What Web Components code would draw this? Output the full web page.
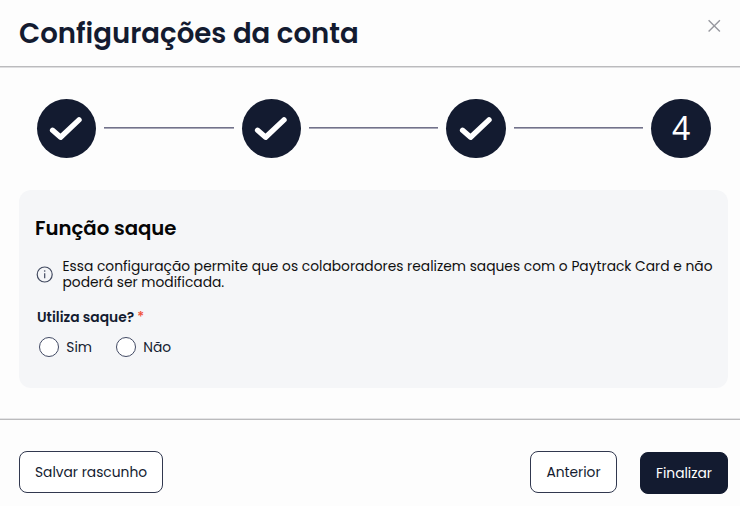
<!DOCTYPE html>
<html lang="pt-BR">
<head>
  <meta charset="UTF-8" />
  <meta name="viewport" content="width=device-width, initial-scale=1.0" />
  <title>Configurações da conta</title>
  <style>
    :root {
      --navy: #131b30;
      --surface: #fdfdfd;
      --panel: #f5f6f8;
    }

    body {
      margin: 0;
      background-color: var(--surface);
      color: var(--navy);
      font-family: Poppins, Inter, "Liberation Sans", sans-serif;
      overflow: hidden;
    }
  </style>
</head>
<body>
  <account-dialog>
    <span slot="title">Configurações da conta</span>
    <step-progress current="4" total="4"></step-progress>
    <settings-panel>
      <span slot="title">Função saque</span>
      <info-note>Essa configuração permite que os colaboradores realizem saques com o Paytrack Card e não<br />poderá ser modificada.</info-note>
      <radio-group label="Utiliza saque?">
        <radio-option>Sim</radio-option>
        <radio-option>Não</radio-option>
      </radio-group>
    </settings-panel>
    <action-button slot="start" style="width: 144px">Salvar rascunho</action-button>
    <action-button slot="end" style="width: 87px">Anterior</action-button>
    <action-button slot="end" primary style="width: 88px">Finalizar</action-button>
  </account-dialog>

  <script>
    class AccountDialog extends HTMLElement {
      constructor() {
        super();
        this.attachShadow({ mode: "open" });
      }

      connectedCallback() {
        this.shadowRoot.innerHTML = `
          <style>
            :host {
              display: flex;
              flex-direction: column;
              box-sizing: border-box;
              width: 740px;
              height: 506px;
              background-color: var(--surface);
            }

            header {
              display: flex;
              justify-content: space-between;
              align-items: flex-start;
              box-sizing: border-box;
              height: 68px;
              padding: 14px 19px 0 19px;
              border-bottom: 1px solid #dedee0;
              box-shadow: inset 0 -1px #bbbbbd;
            }

            h1 {
              margin: 0;
              font-size: 27.6px;
              line-height: 40px;
              font-weight: 600;
              white-space: nowrap;
            }

            button {
              display: flex;
              padding: 0;
              margin-top: 5px;
              border: 0;
              background: none;
            }

            main {
              flex: 1;
              padding: 30px 12px 0 19px;
            }

            footer {
              display: flex;
              justify-content: space-between;
              box-sizing: border-box;
              height: 88px;
              padding: 32px 12px 0 19px;
              border-top: 1px solid #e4e4e6;
              box-shadow: inset 0 1px #bbbbbd;
            }

            .end {
              display: flex;
              gap: 23px;
            }
          </style>
          <header>
            <h1><slot name="title"></slot></h1>
            <button type="button" aria-label="Fechar">
              <svg width="14" height="14" viewBox="0 0 14 14" fill="none" stroke="#97989f" stroke-width="1.4">
                <path d="M1.6 1.3L12.9 12.6M12.9 1.3L1.6 12.6" />
              </svg>
            </button>
          </header>
          <main><slot></slot></main>
          <footer>
            <slot name="start"></slot>
            <div class="end"><slot name="end"></slot></div>
          </footer>
        `;
      }
    }

    class StepProgress extends HTMLElement {
      constructor() {
        super();
        this.attachShadow({ mode: "open" });
      }

      connectedCallback() {
        const current = Number(this.getAttribute("current"));
        const total = Number(this.getAttribute("total"));
        const check = `
          <svg width="60" height="60" viewBox="0 0 60 60" fill="none" stroke="#fff" stroke-width="5.4" stroke-linecap="round" stroke-linejoin="round">
            <path d="M16.6 32.3L24.6 39.2L43 21.9" />
          </svg>`;

        let items = "";
        for (let i = 1; i <= total; i++) {
          if (i > 1) items += `<div class="line"></div>`;
          items += `<div class="step">${i < current ? check : `<span>${i}</span>`}</div>`;
        }

        this.shadowRoot.innerHTML = `
          <style>
            :host {
              display: flex;
              align-items: center;
              gap: 8px;
              padding: 0 17.2px 0 17.7px;
              height: 60.5px;
            }

            .step {
              display: flex;
              justify-content: center;
              align-items: center;
              flex: none;
              width: 59.5px;
              height: 59.5px;
              border-radius: 50%;
              background-color: var(--navy);
              color: #fff;
              font-family: "Noto Sans", "Open Sans", sans-serif;
              font-size: 32px;
              line-height: 40px;
              font-weight: 400;
            }

            .step svg {
              flex: none;
            }

            .line {
              flex: 1;
              height: 1px;
              margin-bottom: 2px;
              background-color: #72728a;
              box-shadow: 0 1px #a8a8b8;
            }
          </style>
          ${items}
        `;
      }
    }

    class SettingsPanel extends HTMLElement {
      constructor() {
        super();
        this.attachShadow({ mode: "open" });
      }

      connectedCallback() {
        this.shadowRoot.innerHTML = `
          <style>
            :host {
              display: block;
              box-sizing: border-box;
              height: 198.5px;
              margin-top: 31px;
              padding: 23.5px 10px 0 16px;
              border-radius: 12px;
              background-color: var(--panel);
            }

            h2 {
              margin: 0 0 16px;
              color: #050505;
              font-size: 19.7px;
              line-height: 30px;
              font-weight: 600;
            }
          </style>
          <h2><slot name="title"></slot></h2>
          <slot></slot>
        `;
      }
    }

    class InfoNote extends HTMLElement {
      constructor() {
        super();
        this.attachShadow({ mode: "open" });
      }

      connectedCallback() {
        this.shadowRoot.innerHTML = `
          <style>
            :host {
              display: flex;
              align-items: center;
              gap: 9.5px;
              padding-left: 1px;
              color: #101010;
              font-size: 13.8px;
              line-height: 16px;
              white-space: nowrap;
            }

            svg {
              flex: none;
              margin-bottom: 2px;
            }
          </style>
          <svg width="17" height="17" viewBox="0 0 17 17" fill="none" stroke="#424a60" stroke-width="1.2">
            <circle cx="8.7" cy="8.5" r="7.5" />
            <path d="M8.7 7.2V12.3" />
            <circle cx="8.7" cy="5" r=".8" fill="#424a60" stroke="none" />
          </svg>
          <div><slot></slot></div>
        `;
      }
    }

    class RadioGroup extends HTMLElement {
      constructor() {
        super();
        this.attachShadow({ mode: "open" });
      }

      connectedCallback() {
        this.shadowRoot.innerHTML = `
          <style>
            :host {
              display: block;
              padding: 15.5px 0 0 2px;
            }

            .label {
              font-size: 13.8px;
              line-height: 22px;
              font-weight: 600;
            }

            .required {
              color: #f04e37;
              font-weight: 500;
            }

            .options {
              display: flex;
              gap: 23.5px;
              padding: 7.5px 0 0 1.5px;
            }
          </style>
          <div class="label"><span class="text">${this.getAttribute("label")}</span> <span class="required">*</span></div>
          <div class="options" role="radiogroup"><slot></slot></div>
        `;
      }
    }

    class RadioOption extends HTMLElement {
      constructor() {
        super();
        this.attachShadow({ mode: "open" });
      }

      connectedCallback() {
        this.shadowRoot.innerHTML = `
          <style>
            :host {
              display: flex;
              align-items: center;
              gap: 7.8px;
              font-size: 13.8px;
              line-height: 21px;
            }

            .dot {
              box-sizing: border-box;
              width: 20px;
              height: 20px;
              border: 1.5px solid #424a64;
              border-radius: 50%;
              background-color: #fff;
            }

            .text {
              padding-top: 1px;
              margin-bottom: -1px;
            }
          </style>
          <span class="dot"></span>
          <span class="text"><slot></slot></span>
        `;
      }
    }

    class ActionButton extends HTMLElement {
      constructor() {
        super();
        this.attachShadow({ mode: "open" });
      }

      connectedCallback() {
        this.shadowRoot.innerHTML = `
          <style>
            :host {
              display: block;
              height: 42px;
            }

            :host([primary]) {
              margin-top: 1px;
            }

            button {
              width: 100%;
              height: 100%;
              padding: 2px 0 0;
              border: 1px solid #31384f;
              border-radius: 8px;
              background-color: #fff;
              color: var(--navy);
              font: inherit;
              font-size: 13.8px;
              white-space: nowrap;
            }

            :host([primary]) button {
              background-color: var(--navy);
              border-color: var(--navy);
              color: #fff;
            }
          </style>
          <button type="button"><slot></slot></button>
        `;
      }
    }

    customElements.define("account-dialog", AccountDialog);
    customElements.define("step-progress", StepProgress);
    customElements.define("settings-panel", SettingsPanel);
    customElements.define("info-note", InfoNote);
    customElements.define("radio-group", RadioGroup);
    customElements.define("radio-option", RadioOption);
    customElements.define("action-button", ActionButton);
  </script>
</body>
</html>
